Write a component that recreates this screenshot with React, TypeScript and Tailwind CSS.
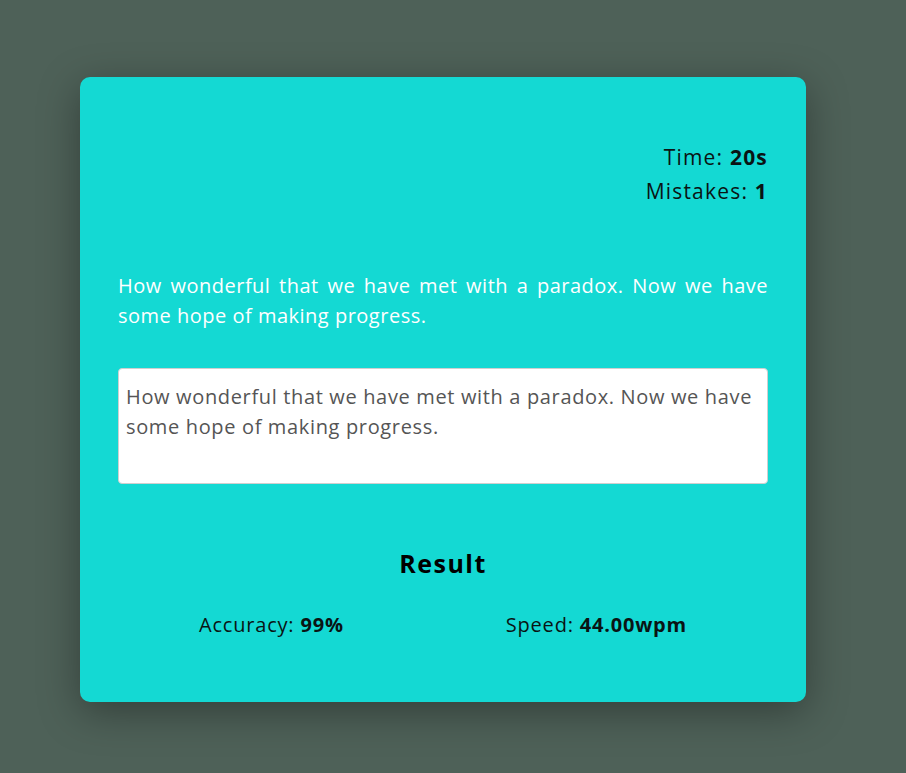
import React from 'react';

const quote = 'How wonderful that we have met with a paradox. Now we have some hope of making progress.';

export default function App() {
  return (
    <div className="min-h-screen bg-[#4e6158] pt-[77px] font-['Open_Sans',sans-serif]">
      <div className="ml-[80px] w-[726px] h-[625px] rounded-[10px] bg-[#14d9d3] px-[38px] pt-[63px] shadow-[0_10px_40px_rgba(0,0,0,0.35)]">
        <div className="text-right text-[21px] leading-[34px] tracking-[1.2px] text-[#0a1414]">
          <p>
            Time: <span className="font-bold">20s</span>
          </p>
          <p>
            Mistakes: <span className="font-bold">1</span>
          </p>
        </div>

        <p className="mt-[63px] text-justify text-[20px] leading-[30px] tracking-[0.5px] text-white">{quote}</p>

        <textarea
          readOnly
          value={quote}
          className="mt-[37px] block w-full h-[116px] resize-none rounded-[4px] border border-[#cfcfcf] bg-white px-[7px] py-[13px] text-[20px] leading-[30px] tracking-[0.65px] text-[#555] outline-none"
        />

        <h2 className="mt-[63px] text-center text-[25px] leading-[32px] tracking-[1.5px] font-bold text-black">Result</h2>

        <div className="mt-[31px] flex justify-around text-[20px] leading-[30px] tracking-[0.8px] text-[#0a1414]">
          <p>
            Accuracy: <span className="font-bold">99%</span>
          </p>
          <p>
            Speed: <span className="font-bold">44.00wpm</span>
          </p>
        </div>
      </div>
    </div>
  );
}
